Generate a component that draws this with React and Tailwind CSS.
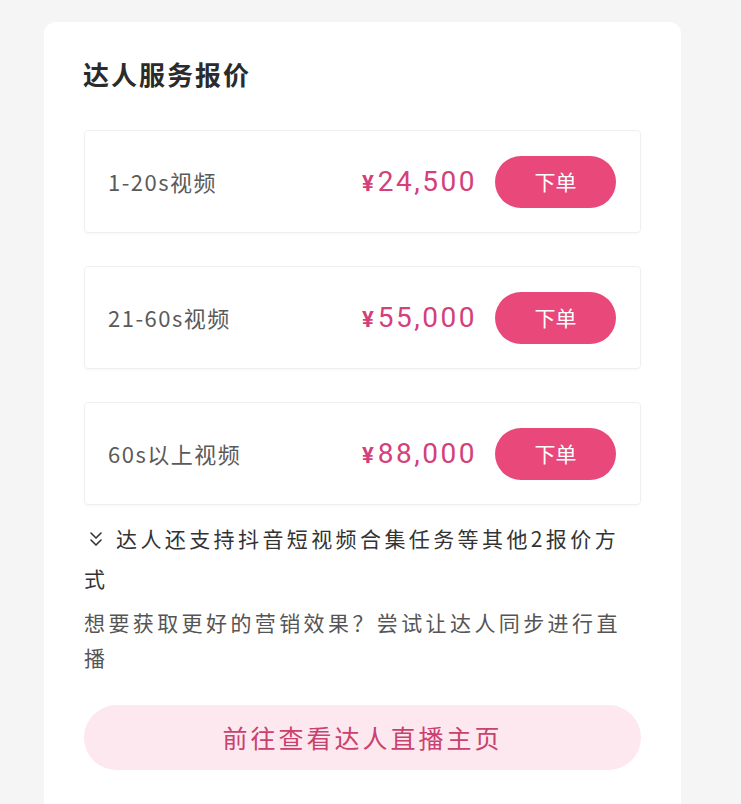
import React from "react";
import { ChevronsDown } from "lucide-react";

const quotes = [
  { label: "1-20s视频", price: "24,500" },
  { label: "21-60s视频", price: "55,000" },
  { label: "60s以上视频", price: "88,000" },
];

const font = {
  fontFamily: '"Noto Sans CJK SC", "Noto Sans", sans-serif',
};

export default function App() {
  return (
    <div
      className="w-[741px] min-h-[804px] bg-[#f5f5f5] pl-[44px] pr-[60px] pt-[22px]"
      style={font}
    >
      <div className="bg-white rounded-t-[12px] min-h-[782px] px-[40px] pt-[38px] pb-[30px]">
        {/* title */}
        <h2 className="text-[26px] leading-[28px] font-bold text-[#2b2b2b] tracking-[2px] -ml-[1px]">
          达人服务报价
        </h2>

        {/* quote rows */}
        <div className="mt-[42px] flex flex-col gap-[33px]">
          {quotes.map((q) => (
            <div
              key={q.label}
              className="h-[103px] flex items-center justify-between pl-[23px] pr-[24px] border border-[#efefef] rounded-[4px] shadow-[0_1px_3px_rgba(0,0,0,0.03)]"
            >
              <span className="text-[22px] text-[#5a5a5a] tracking-[1.5px]">
                {q.label}
              </span>
              <div className="flex items-center gap-[18px]">
                <span className="text-[#d4407a] flex items-baseline font-[Roboto]">
                  <span className="text-[22px] font-bold mr-[4px]">¥</span>
                  <span className="text-[28px] tracking-[2.5px]">{q.price}</span>
                </span>
                <button className="w-[121px] h-[52px] rounded-full bg-[#e8487a] text-white text-[21px] flex items-center justify-center">
                  下单
                </button>
              </div>
            </div>
          ))}
        </div>

        {/* more options */}
        <p className="mt-[13px] text-[21px] leading-[40px] text-[#333333] tracking-[3.4px]">
          <ChevronsDown
            size={24}
            strokeWidth={1.6}
            className="inline-block align-[-4px] mr-[8px] text-[#333333]"
          />
          达人还支持抖音短视频合集任务等其他2报价方式
        </p>
        <p className="mt-[7px] text-[21px] leading-[35px] text-[#555555] tracking-[3.4px]">
          想要获取更好的营销效果？尝试让达人同步进行直播
        </p>

        {/* live page button */}
        <button className="mt-[30px] w-full h-[65px] rounded-full bg-[#fde8ef] text-[#c9416f] text-[25px] tracking-[3px] flex items-center justify-center">
          前往查看达人直播主页
        </button>
      </div>
    </div>
  );
}
